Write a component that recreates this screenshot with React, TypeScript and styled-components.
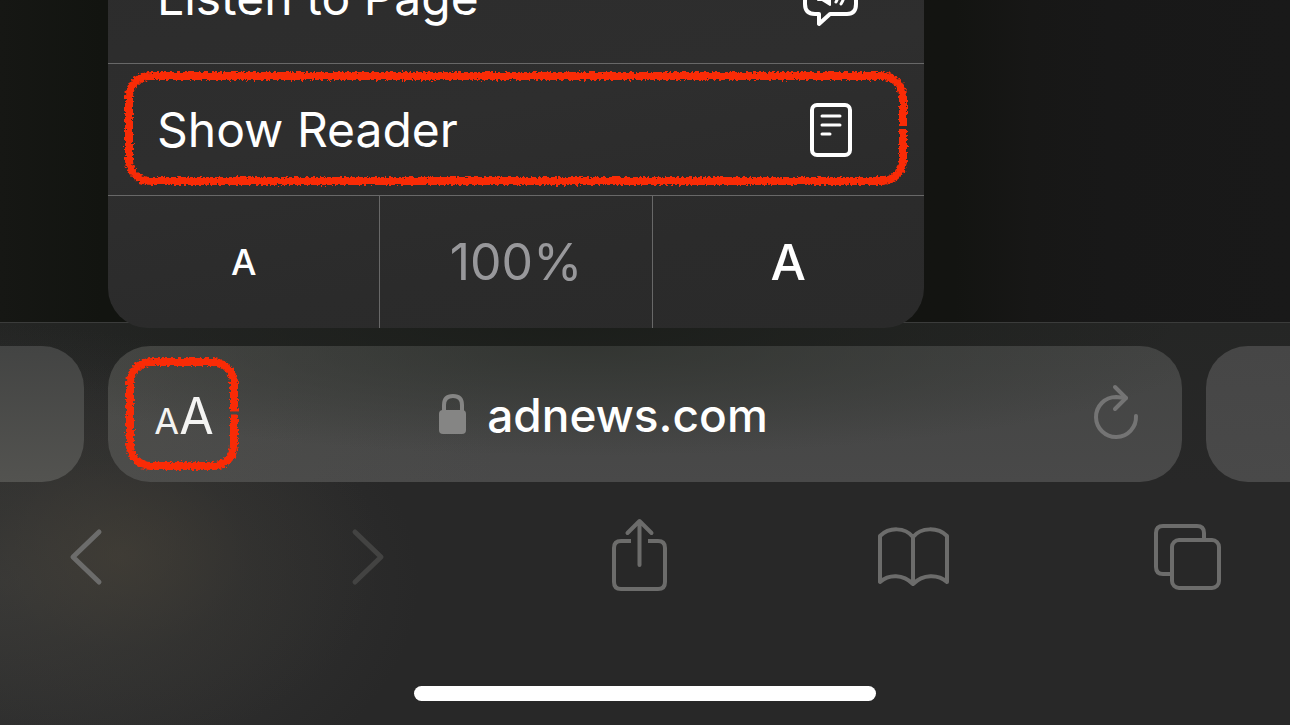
import React from "react";
import styled, { createGlobalStyle } from "styled-components";

const GlobalStyle = createGlobalStyle`
  *, *::before, *::after { box-sizing: border-box; }
  body {
    margin: 0;
    background: #161715;
    color: #fff;
    font-family: Inter, "Liberation Sans", sans-serif;
  }
  button {
    margin: 0;
    padding: 0;
    border: 0;
    background: none;
    color: inherit;
    font: inherit;
  }
`;

const Screen = styled.div`
  display: flex;
  flex-direction: column;
  height: 100vh;
  overflow: hidden;
`;

const PageArea = styled.main`
  position: relative;
  z-index: 1;
  flex: 1;
  min-height: 0;
  display: flex;
  flex-direction: column;
  justify-content: flex-end;
  background: linear-gradient(90deg, #161714 0, #121410 8%, #131411 74%, #171716 80%, #181818 86%, #191919 100%);
`;

const Menu = styled.div`
  flex-shrink: 0;
  width: min(816px, calc(100% - 216px));
  margin: 0 0 -6px 108px;
  border-radius: 0 0 40px 40px;
  overflow: hidden;
  background: linear-gradient(170deg, #2c2c2c 0%, #2e2e2e 45%, #2b2b2b 75%, #2a2a2a 100%);
`;

const MenuRow = styled.button`
  position: relative;
  display: flex;
  align-items: center;
  justify-content: space-between;
  width: 100%;
  height: 132px;
  padding: 0 65px 0 49px;
  border-bottom: 1px solid #686868;
  font-size: 48px;
  line-height: 60px;
  text-align: left;
`;

const ZoomRow = styled.div`
  display: flex;
  height: 132px;
`;

const ZoomCell = styled.button<{ $size: number; $muted?: boolean }>`
  flex: 1;
  font-size: ${(p) => p.$size}px;
  font-weight: ${(p) => (p.$muted ? 400 : 500)};
  line-height: 60px;
  color: ${(p) => (p.$muted ? "#98989b" : "#fff")};

  & + & {
    border-left: 1px solid #686868;
  }
`;

const Chrome = styled.footer`
  flex-shrink: 0;
  border-top: 1px solid #3b3c3b;
  padding: 23px 0 24px;
  background:
    radial-gradient(ellipse 260px 190px at 120px 232px, rgba(74, 68, 56, 0.5), rgba(60, 58, 52, 0.26) 50%, transparent 100%),
    radial-gradient(ellipse 420px 260px at 0 260px, rgba(72, 72, 70, 0.5), transparent 100%),
    radial-gradient(ellipse 620px 110px at 560px 0, rgba(26, 29, 25, 0.9), transparent 100%),
    linear-gradient(#252625, #282828 40%, #282828);
`;

const TabStrip = styled.div`
  display: flex;
  gap: 24px;
  height: 136px;
`;

const NeighbourTab = styled.div<{ $side: "left" | "right" }>`
  width: 84px;
  border-radius: ${(p) => (p.$side === "left" ? "0 42px 42px 0" : "42px 0 0 42px")};
  background: ${(p) =>
    p.$side === "left" ? "linear-gradient(#434443, #535350)" : "linear-gradient(#464646, #494949)"};
`;

const AddressBar = styled.div`
  flex: 1;
  display: flex;
  align-items: center;
  padding: 0 38px 0 17px;
  border-radius: 42px;
  background:
    radial-gradient(ellipse 620px 110px at 480px 0, rgba(48, 51, 47, 0.85), transparent 100%),
    linear-gradient(90deg, rgba(84, 84, 78, 0.35), transparent 36%),
    linear-gradient(#434443, #494949);
`;

const TextSizeButton = styled.button`
  position: relative;
  display: flex;
  align-items: baseline;
  justify-content: center;
  width: 114px;
  height: 114px;
  padding: 2px 0 0 4px;
  color: #f4f4f2;
  line-height: 114px;
`;

const Letter = styled.span<{ $size: number }>`
  font-size: ${(p) => p.$size}px;
`;

const Address = styled.div`
  flex: 1;
  display: flex;
  align-items: center;
  justify-content: center;
  gap: 20px;
  padding-right: 120px;
  font-size: 46px;
  font-weight: 500;
  line-height: 60px;
`;

const AddressText = styled.span`
  padding-top: 2px;
`;

const ReloadButton = styled.button`
  width: 56px;
  height: 72px;
  color: #747474;
`;

const Toolbar = styled.nav`
  display: flex;
  justify-content: space-between;
  margin-top: 39px;
  padding: 0 66px 0 51px;
`;

const ToolButton = styled.button<{ $dim?: boolean }>`
  width: 72px;
  height: 72px;
  color: ${(p) => (p.$dim ? "#434342" : "#6c6c6b")};
`;

const HomeIndicator = styled.div`
  width: 462px;
  max-width: 60%;
  height: 15px;
  margin: 93px auto 0;
  border-radius: 8px;
  background: #fff;
`;

const Icon = styled.svg`
  display: block;
  flex-shrink: 0;
  overflow: visible;
  fill: none;
  stroke: currentColor;
  stroke-linecap: round;
  stroke-linejoin: round;
`;

const MarkerLayer = styled.div<{ $inset: string }>`
  position: absolute;
  inset: ${(p) => p.$inset};
  pointer-events: none;

  svg {
    display: block;
    width: 100%;
    height: 100%;
    overflow: visible;
  }
`;

/* Rounded crayon outline with a small break in the middle of the right side. */
function Marker({ id, inset }: { id: string; inset: string }) {
  return (
    <MarkerLayer $inset={inset} aria-hidden="true">
      <svg>
        <defs>
          <filter id={id} x="-10%" y="-10%" width="120%" height="120%" colorInterpolationFilters="sRGB">
            <feTurbulence type="fractalNoise" baseFrequency="0.4" numOctaves="2" seed="7" result="noise" />
            <feDisplacementMap in="SourceGraphic" in2="noise" scale="6" xChannelSelector="R" yChannelSelector="G" />
          </filter>
          <mask id={`${id}-gap`} maskUnits="userSpaceOnUse" x="-10" y="-10" width="2000" height="200">
            <rect x="-10" y="-10" width="2000" height="200" fill="#fff" />
            <line x1="90%" x2="110%" y1="49%" y2="49%" stroke="#000" strokeWidth="3" />
          </mask>
        </defs>
        <g mask={`url(#${id}-gap)`}>
          <g filter={`url(#${id})`}>
            <rect width="100%" height="100%" rx="21" fill="none" stroke="#f92b06" strokeWidth="8" />
          </g>
        </g>
      </svg>
    </MarkerLayer>
  );
}

export default function App() {
  return (
    <>
      <GlobalStyle />
      <Screen>
        <PageArea>
          <Menu>
            <MenuRow type="button">
              <span>Listen to Page</span>
              <Icon width="56" height="60" strokeWidth="4" aria-hidden="true">
                <path d="M12 6H44Q53 6 53 16V36Q53 46 44 46H27L16 56V46H12Q2 46 2 36V16Q2 6 12 6Z" />
                <path d="M15 24H19L27 17V37L19 32H15Z" fill="currentColor" strokeWidth="2" />
                <path d="M33 20Q37 27 33 34M38 17Q44 27 38 36" strokeWidth="3" />
              </Icon>
            </MenuRow>
            <MenuRow type="button">
              <span>Show Reader</span>
              <Icon width="56" height="60" strokeWidth="4" aria-hidden="true">
                <rect x="9" y="5" width="38" height="50" rx="5" />
                <path d="M19 16H37M19 25H37M19 34H27" strokeWidth="3" />
              </Icon>
              <Marker id="crayon-row" inset="12px 21px 14px 21px" />
            </MenuRow>
            <ZoomRow>
              <ZoomCell type="button" $size={36} aria-label="Smaller text">A</ZoomCell>
              <ZoomCell type="button" $size={50} $muted>100%</ZoomCell>
              <ZoomCell type="button" $size={50} aria-label="Larger text">A</ZoomCell>
            </ZoomRow>
          </Menu>
        </PageArea>

        <Chrome>
          <TabStrip>
            <NeighbourTab $side="left" />
            <AddressBar>
              <TextSizeButton type="button" aria-label="Page settings">
                <Letter $size={36}>A</Letter>
                <Letter $size={50}>A</Letter>
                <Marker id="crayon-size" inset="5px" />
              </TextSizeButton>
              <Address>
                <Icon width="28" height="40" color="#858584" strokeWidth="4" aria-hidden="true">
                  <path d="M5 18V11Q5 2 14 2T23 11V18" />
                  <rect x="0" y="16" width="27" height="24" rx="4" fill="currentColor" stroke="none" />
                </Icon>
                <AddressText>adnews.com</AddressText>
              </Address>
              <ReloadButton type="button" aria-label="Reload">
                <Icon width="56" height="72" strokeWidth="4">
                  <path d="M48 38A20 20 0 1 1 28 19L38 20" />
                  <path d="M27 9L38 20L27 31" />
                </Icon>
              </ReloadButton>
            </AddressBar>
            <NeighbourTab $side="right" />
          </TabStrip>

          <Toolbar>
            <ToolButton type="button" aria-label="Back">
              <Icon width="72" height="72" strokeWidth="5">
                <path d="M48 11L22 36L48 61" />
              </Icon>
            </ToolButton>
            <ToolButton type="button" aria-label="Forward" $dim>
              <Icon width="72" height="72" strokeWidth="5">
                <path d="M29 11L55 36L29 61" />
              </Icon>
            </ToolButton>
            <ToolButton type="button" aria-label="Share">
              <Icon width="72" height="72" strokeWidth="4">
                <path d="M29 20H19Q12 20 12 27V61Q12 68 19 68H56Q63 68 63 61V27Q63 20 56 20H46" strokeLinecap="butt" />
                <path d="M37.5 1V44M25.5 12L37.5 0L49.5 12" />
              </Icon>
            </ToolButton>
            <ToolButton type="button" aria-label="Bookmarks">
              <Icon width="72" height="72" strokeWidth="4">
                <path d="M3 61V15C12 6 28 6 36 16C44 6 61 6 70 15V61C61 53 46 53 36 63C26 53 12 53 3 61ZM36 16V62" />
              </Icon>
            </ToolButton>
            <ToolButton type="button" aria-label="Tabs">
              <Icon width="72" height="72" strokeWidth="4">
                <path d="M52 19V12Q52 5 45 5H11Q4 5 4 12V46Q4 53 11 53H20" strokeLinecap="butt" />
                <rect x="20" y="19" width="47" height="48" rx="7" />
              </Icon>
            </ToolButton>
          </Toolbar>
          <HomeIndicator />
        </Chrome>
      </Screen>
    </>
  );
}
